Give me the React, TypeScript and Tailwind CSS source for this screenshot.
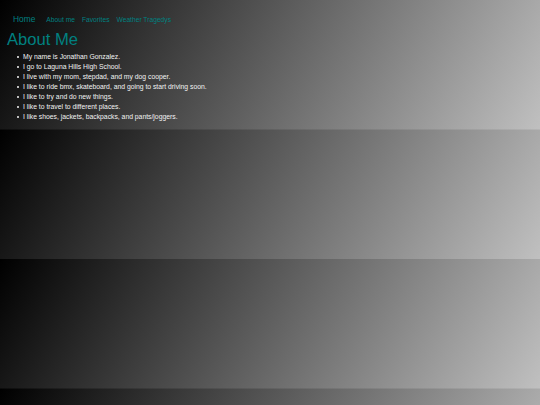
import React from 'react';

const facts = [
  'My name is Jonathan Gonzalez.',
  'I go to Laguna Hills High School.',
  'I live with my mom, stepdad, and my dog cooper.',
  'I like to ride bmx, skateboard, and going to start driving soon.',
  'I like to try and do new things.',
  'I like to travel to different places.',
  'I like shoes, jackets, backpacks, and pants/joggers.',
];

export default function App() {
  return (
    <div className="min-h-screen w-full bg-[linear-gradient(120deg,#000000,#c0c0c0)] bg-[length:100%_129.5px] bg-repeat-y font-['Liberation_Sans',Arial,sans-serif]">
      <div className="pl-[7px] pt-[12.5px]">
        {/* nav */}
        <nav className="flex items-baseline pl-[6px] leading-[12px] text-[#008080]">
          <a className="text-[8.4px]">Home</a>
          <a className="ml-[11px] text-[6.7px]">About me</a>
          <a className="ml-[7px] text-[6.7px]">Favorites</a>
          <a className="ml-[7px] text-[6.7px]">Weather Tragedys</a>
        </nav>

        <h1 className="mt-[4px] text-[16.6px] leading-[20px] text-[#008080]">About Me</h1>

        <ul className="mt-[2.5px] pl-[9.5px] text-[6.8px] leading-[10px] text-[#f2f2f2]">
          {facts.map((f) => (
            <li key={f} className="flex items-center">
              <span className="mr-[4px] h-[2.5px] w-[2.5px] rounded-full bg-[#f2f2f2]" />
              {f}
            </li>
          ))}
        </ul>
      </div>
    </div>
  );
}
